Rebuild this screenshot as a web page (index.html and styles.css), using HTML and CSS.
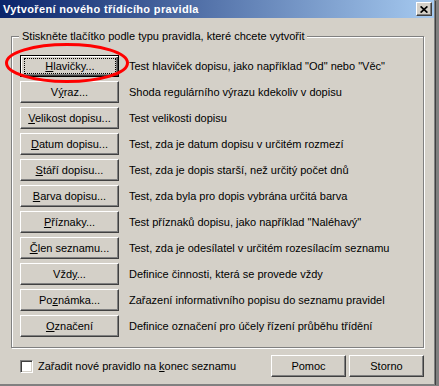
FILE: index.html
```html
<!DOCTYPE html>
<html lang="cs">
<head>
    <meta charset="UTF-8">
    <title>Vytvoření nového třídícího pravidla</title>
    <link rel="stylesheet" href="styles.css">
</head>
<body>
    <div class="window">
        <div class="titlebar">
            <span class="title">Vytvoření nového třídícího pravidla</span>
            <button class="close" aria-label="Zavřít">
                <svg width="8" height="7" viewBox="0 0 8 7"><path d="M0.6 0.4 L7.4 6.6 M7.4 0.4 L0.6 6.6" stroke="#000" stroke-width="1.7" fill="none"/></svg>
            </button>
        </div>

        <div class="group">
            <div class="legend">Stiskněte tlačítko podle typu pravidla, které chcete vytvořit</div>
            <div class="rows">
                <div class="row">
                    <button class="btn btn-default"><span class="focus"><u>H</u>lavičky...</span></button>
                    <span class="desc">Test hlaviček dopisu, jako například "Od" nebo "Věc"</span>
                </div>
                <div class="row">
                    <button class="btn">V<u>ý</u>raz...</button>
                    <span class="desc">Shoda regulárního výrazu kdekoliv v dopisu</span>
                </div>
                <div class="row">
                    <button class="btn"><u>V</u>elikost dopisu...</button>
                    <span class="desc">Test velikosti dopisu</span>
                </div>
                <div class="row">
                    <button class="btn"><u>D</u>atum dopisu...</button>
                    <span class="desc">Test, zda je datum dopisu v určitém rozmezí</span>
                </div>
                <div class="row">
                    <button class="btn"><u>S</u>táří dopisu...</button>
                    <span class="desc">Test, zda je dopis starší, než určitý počet dnů</span>
                </div>
                <div class="row">
                    <button class="btn"><u>B</u>arva dopisu...</button>
                    <span class="desc">Test, zda byla pro dopis vybrána určitá barva</span>
                </div>
                <div class="row">
                    <button class="btn"><u>P</u>říznaky...</button>
                    <span class="desc">Test příznaků dopisu, jako například "Naléhavý"</span>
                </div>
                <div class="row">
                    <button class="btn"><u>Č</u>len seznamu...</button>
                    <span class="desc">Test, zda je odesílatel v určitém rozesílacím seznamu</span>
                </div>
                <div class="row">
                    <button class="btn">Vžd<u>y</u>...</button>
                    <span class="desc">Definice činnosti, která se provede vždy</span>
                </div>
                <div class="row">
                    <button class="btn">Po<u>z</u>námka...</button>
                    <span class="desc">Zařazení informativního popisu do seznamu pravidel</span>
                </div>
                <div class="row">
                    <button class="btn"><u>O</u>značení</button>
                    <span class="desc">Definice označení pro účely řízení průběhu třídění</span>
                </div>
            </div>
        </div>

        <div class="footer">
            <label class="option"><span class="check"></span><span>Zařadit nové pravidlo na <u>k</u>onec seznamu</span></label>
            <div class="actions">
                <button class="btn btn-small">Pomoc</button>
                <button class="btn btn-small">Storno</button>
            </div>
        </div>

        <svg class="mark" width="140" height="100" viewBox="0 0 140 100">
            <ellipse cx="67" cy="63" rx="60.5" ry="18.5" fill="none" stroke="#ff0000" stroke-width="3"/>
        </svg>
    </div>
</body>
</html>
```

FILE: styles.css
```css
body {
    margin: 0;
    background-color: #808080;
    font-family: "Liberation Sans", Arial, sans-serif;
    font-size: 11px;
    color: #000;
}
.window {
    position: relative;
    width: 434px;
    height: 384px;
    background-color: #d4d0c8;
    border-right: 1px solid #808080;
    border-bottom: 1px solid #808080;
    box-shadow: 1px 1px 0 #404040;
}
.titlebar {
    height: 18px;
    display: flex;
    align-items: center;
    justify-content: space-between;
    padding: 0 2px 0 3px;
    background: linear-gradient(to right, #0a246a, #a6caf0);
    color: #fff;
    font-weight: bold;
}
.title {
    letter-spacing: 0.35px;
}
.close {
    width: 16px;
    height: 14px;
    padding: 0;
    display: flex;
    align-items: center;
    justify-content: center;
    background-color: #d4d0c8;
    border: 1px solid;
    border-color: #fff #404040 #404040 #fff;
    box-shadow: inset -1px -1px #808080;
}
.group {
    margin: 18px 0 0 11px;
    width: 413px;
    box-sizing: border-box;
    border: 1px solid #808080;
    box-shadow: 1px 1px 0 #fff, inset 1px 1px 0 #fff;
    padding: 0 8px 10px 8px;
}
.legend {
    width: fit-content;
    margin: -7px 0 0 -1px;
    padding: 0 3px;
    line-height: 13px;
    background-color: #d4d0c8;
}
.rows {
    margin-top: 12px;
    display: flex;
    flex-direction: column;
    gap: 4px;
}
.row {
    display: flex;
    align-items: center;
    gap: 10px;
}
.desc {
    white-space: nowrap;
}
.btn {
    width: 99px;
    height: 22px;
    box-sizing: border-box;
    padding: 0;
    font: inherit;
    color: #000;
    background-color: #d4d0c8;
    border: 1px solid;
    border-color: #fff #404040 #404040 #fff;
    box-shadow: inset -1px -1px #808080;
}
.btn-default {
    border-color: #000;
    box-shadow: inset 1px 1px #fff, inset -1px -1px #404040, inset -2px -2px #808080;
}
.focus {
    display: block;
    margin: 0 2px 0 3px;
    border: 1px dotted #000;
    line-height: 14px;
}
.footer {
    display: flex;
    align-items: center;
    justify-content: space-between;
    margin-top: 7px;
    padding: 0 10px 0 20px;
}
.option {
    display: flex;
    align-items: center;
    gap: 5px;
}
.check {
    width: 13px;
    height: 13px;
    box-sizing: border-box;
    background-color: #fff;
    border: 1px solid;
    border-color: #808080 #fff #fff #808080;
    box-shadow: inset 1px 1px #404040, inset -1px -1px #d4d0c8;
}
.actions {
    display: flex;
    gap: 3px;
}
.btn-small {
    width: 75px;
}
.mark {
    position: absolute;
    left: 0;
    top: 0;
    pointer-events: none;
}
```
